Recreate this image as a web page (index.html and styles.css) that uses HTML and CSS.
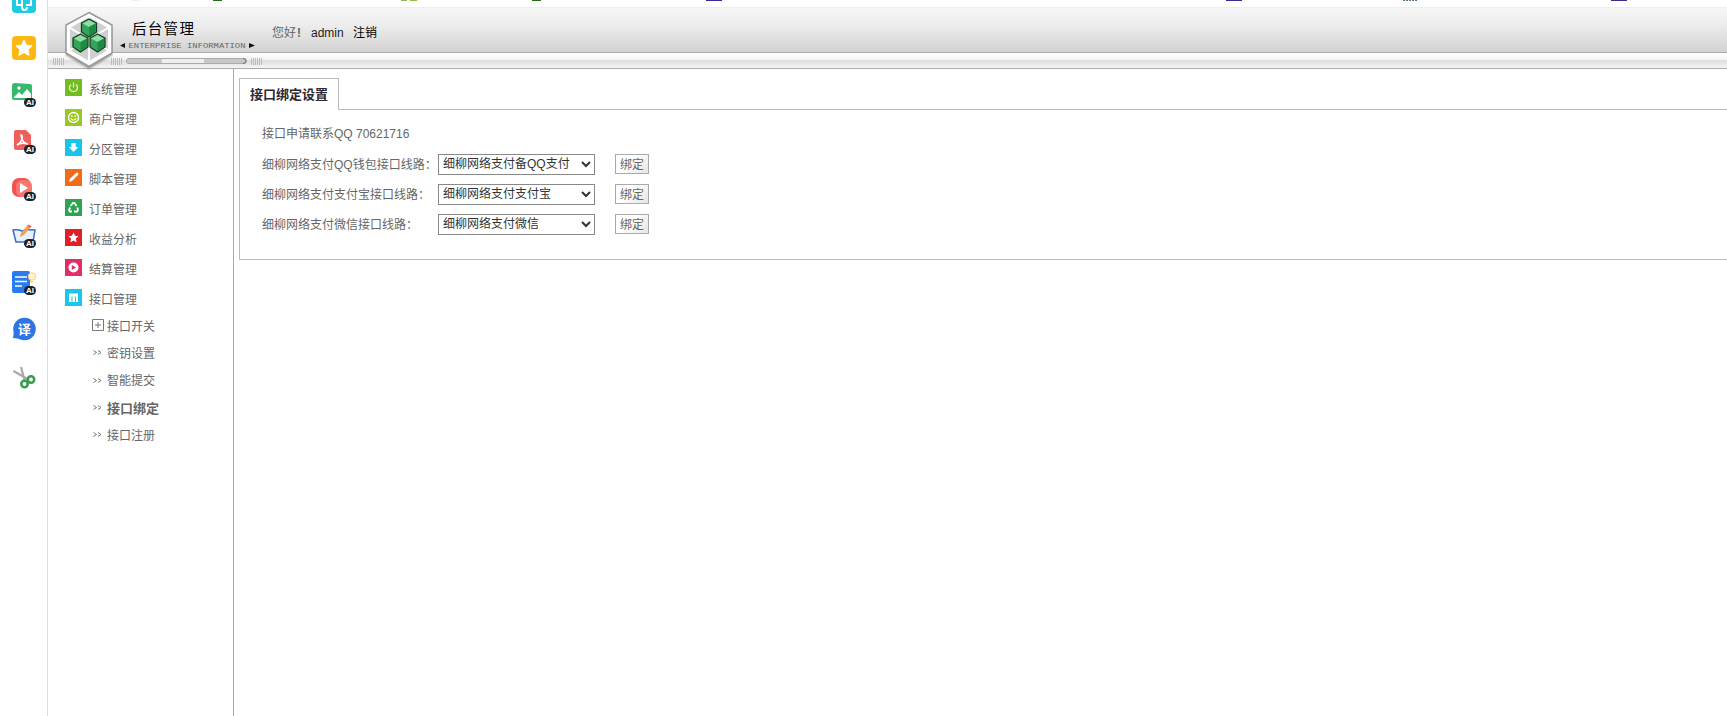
FILE: index.html
```html
<!DOCTYPE html>
<html lang="zh-CN">
<head>
<meta charset="utf-8">
<title>后台管理</title>
<link rel="stylesheet" href="styles.css">
</head>
<body>
<div class="app">
  <aside class="rail">
    <svg class="tool" viewBox="0 0 24 24"><rect width="24" height="24" rx="4" fill="#21cbe3"/><path d="M5 10v6h5M19 10v6h-5M10 10v8q0 3 2.500 3t2.500-3" fill="none" stroke="#fff" stroke-width="2"/></svg>
    <svg class="tool" viewBox="0 0 24 24"><rect width="24" height="24" rx="4" fill="#fdb813"/><path d="M12 4l2.500 5.200 5.600.7-4.100 3.900 1.100 5.600-5.100-2.800-5.100 2.800L8 13.800 3.900 9.900l5.600-.7z" fill="#fff" stroke="#fff" stroke-linejoin="round"/></svg>
    <svg class="tool" viewBox="0 0 24 24"><path d="M3 0l15 1q2 0 2 2v12q0 2-2 2H2q-2 0-2-2V3q0-3 3-3z" fill="#35b96c"/><circle cx="7" cy="5" r="1.700" fill="#fff"/><path d="M2 14l5-5 3 3 5-6 4 5v4H2z" fill="#fff"/><g class="ai"><rect x="12" y="15" width="12" height="9" rx="4.500"/><text x="18" y="22">AI</text></g></svg>
    <svg class="tool" viewBox="0 0 24 24"><path d="M4 0h10l5 5v13q0 2-2 2H4q-2 0-2-2V2q0-2 2-2z" fill="#f0605b"/><path d="M9 5q2 0 1 4-1 4-5 6 4-3 11-1-5-1-6-5-1-3-1-4z" fill="none" stroke="#fff" stroke-width="1.500"/><g class="ai"><rect x="12" y="15" width="12" height="9" rx="4.500"/><text x="18" y="22">AI</text></g></svg>
    <svg class="tool" viewBox="0 0 24 24"><rect y="1" width="19" height="19" rx="7" fill="#f2524f"/><rect x="4" y="3" width="16" height="17" rx="6" fill="#fa7771"/><path d="M8 6l8 5-8 5z" fill="#fff"/><g class="ai"><rect x="12" y="15" width="12" height="9" rx="4.500"/><text x="18" y="22">AI</text></g></svg>
    <svg class="tool" viewBox="0 0 24 24"><path d="M1 6q5-1 9 1 5-2 13-1l-2 12H4z" fill="#e8f1ff" stroke="#4169c5" stroke-width="1.500"/><path d="M8 13l1-4 6-7 3 2-6 7z" fill="#f0a04b"/><path d="M15 2l1.500-1.500 3 2L18 4z" fill="#e55b50"/><g class="ai"><rect x="12" y="15" width="12" height="9" rx="4.500"/><text x="18" y="22">AI</text></g></svg>
    <svg class="tool" viewBox="0 0 24 24"><rect width="18" height="22" rx="2" fill="#297bf0"/><path d="M3 6h12M3 10.500h12M3 15h7" stroke="#fff" stroke-width="1.700"/><circle cx="20" cy="5.500" r="3.700" fill="#fff2c5" stroke="#f4d28c"/><path d="M18 9v3h3V9" fill="#f7dca0"/><g class="ai"><rect x="12" y="15" width="12" height="9" rx="4.500"/><text x="18" y="22">AI</text></g></svg>
    <svg class="tool" viewBox="0 0 24 24"><circle cx="12.500" cy="11" r="11.300" fill="#2d75e4"/><path d="M2 13l-1 7 9 1z" fill="#2d75e4"/><text class="translate" x="12.500" y="16">译</text></svg>
    <svg class="tool" viewBox="0 0 24 24"><path d="M1.500 6l14 8M9 2l4 15" stroke="#a9a9a9" stroke-width="2.200"/><circle cx="12.500" cy="19" r="3.200" fill="none" stroke="#3a9c50" stroke-width="2.600"/><circle cx="19" cy="14.500" r="3.200" fill="none" stroke="#3a9c50" stroke-width="2.600"/></svg>
  </aside>
  <div class="page">
    <svg class="clipped" viewBox="0 0 1679 7">
      <path d="M83 0h8" stroke="#ddd"/><path d="M165 0h9M484 0h9" stroke="#286b1d" stroke-width="2"/>
      <path d="M353 0h6M362 0h7" stroke="#94b94c" stroke-width="2"/>
      <path d="M658 0h16M1178 0h16M1563 0h16" stroke="#3c2c91" stroke-width="2"/>
      <path d="M1355 0h15" stroke="#567282" stroke-width="2" stroke-dasharray="2 1"/>
    </svg>
    <header>
      <div class="topbar">
        <div class="brand"><strong>后台管理</strong>
          <svg class="tagline" viewBox="0 0 136 7"><path d="M0 3.500l5-2.500v5zM135 3.500l-6-2.500v5z" fill="#111"/><text x="8.500" y="6" textLength="117" lengthAdjust="spacingAndGlyphs">ENTERPRISE INFORMATION</text></svg>
        </div>
        <div class="user"><span>您好<em>!</em></span><b>admin</b><a>注销</a></div>
      </div>
      <div class="strip">
        <svg class="rails" viewBox="0 0 224 15"><g stroke="#bbb"><path d="M5.500 5v7M7.500 5v7M9.500 5v7M11.500 5v7M13.500 5v7M15.500 5v7M63.500 5v7M65.500 5v7M67.500 5v7M69.500 5v7M71.500 5v7M73.500 5v7M203.500 5v7M205.500 5v7M207.500 5v7M209.500 5v7M211.500 5v7M213.500 5v7"/></g><rect x="78.500" y="5.500" width="120" height="5" rx="2.500" fill="#c8c8c8" stroke="#aaa"/><path d="M114 8h42" stroke="#eee" stroke-width="4"/><path d="M195 5.500q3 0 3 2.500t-3 2.500" fill="none" stroke="#777"/></svg>
      </div>
      <svg class="logo" viewBox="0 0 56 60">
        <path d="M28 4L52 17v28L28 60 4 45V17z" fill="#777" opacity=".18"/>
        <path d="M28 6L51 18v26L28 58 5 44V18z" fill="#666" opacity=".4"/>
        <path d="M28 1.500L51 14v28L28 55.500 5 42V14z" fill="#fff" stroke="#999" stroke-width="1.500"/>
        <path d="M28 6L47 17v22L28 50 9 39V17z" fill="#cfcfd1"/><path d="M28 28V6M28 28L47 39M28 28L9 39M28 28v22M28 28L9 17M28 28l19-11" stroke="#fff" stroke-width="2"/>
        <g stroke="#153f22" stroke-width="1.300" stroke-linejoin="round">
          <path d="M28 8l7.500 4v9L28 26l-7.500-5v-9z" fill="#35a557"/><path d="M19.500 23l7.500 4v9l-7.500 5-7.500-5v-9z" fill="#35a557"/><path d="M36.500 23l7.500 4v9l-7.500 5-7.500-5v-9z" fill="#35a557"/>
        </g>
        <path d="M28 9l6.500 3.500L28 16l-6.500-3.500zM19.500 24l6.500 3.500-6.500 3.500-6.500-3.500zM36.500 24l6.500 3.500-6.500 3.500-6.500-3.500z" fill="#91dda8"/>
        <path d="M28 16l6.500-3.500V21L28 25zM19.500 31l6.500-3.500V36l-6.500 4zM36.500 31l6.500-3.500V36l-6.500 4z" fill="#1c8c40"/>
      </svg>
    </header>
    <div class="body">
      <nav>
        <ul class="menu">
          <li><svg viewBox="0 0 17 17"><rect width="17" height="17" fill="#72bd20"/><path d="M6 5.500a4 4 0 1 0 5 0M8.500 3.500v5" fill="none" stroke="#e5f7ca" stroke-width="1.300"/></svg>系统管理</li>
          <li><svg viewBox="0 0 17 17"><rect width="17" height="17" fill="#98c923"/><circle cx="8.500" cy="8.500" r="5" fill="none" stroke="#fff" stroke-width="1.300"/><path d="M6 7.200h1.700M9.300 7.200H11M6 9.500q2.500 3 5 0" fill="none" stroke="#fff" stroke-width="1.200"/></svg>商户管理</li>
          <li><svg viewBox="0 0 17 17"><rect width="17" height="17" fill="#17c4ee"/><path d="M6.300 4h4.400v4h2.500L8.500 13 3.800 8h2.500z" fill="#fff"/></svg>分区管理</li>
          <li><svg viewBox="0 0 17 17"><rect width="17" height="17" fill="#f26b17"/><path d="M4 13l.7-3L10.500 4.500l2-1 1 1-1 2L7 12z" fill="#fff"/></svg>脚本管理</li>
          <li><svg viewBox="0 0 17 17"><rect width="17" height="17" fill="#2ba350"/><path d="M5.500 7L8 4h1.500l2 3M12.300 8.500L13 11l-1 1.500H9M7 12.500H4.800L4 11l1.200-2.500" fill="none" stroke="#fff" stroke-width="1.800"/></svg>订单管理</li>
          <li><svg viewBox="0 0 17 17"><rect width="17" height="17" fill="#df2026"/><path d="M8.500 3.500l1.500 3.300 3.500.4-2.600 2.400.7 3.600-3.100-1.800-3.100 1.800.7-3.600-2.600-2.400 3.500-.4z" fill="#fff"/></svg>收益分析</li>
          <li><svg viewBox="0 0 17 17"><rect width="17" height="17" fill="#e42d66"/><circle cx="8.500" cy="8.500" r="5" fill="#fff"/><path d="M6.800 6l4.200 2.500L6.800 11z" fill="#e42d66"/></svg>结算管理</li>
          <li><svg viewBox="0 0 17 17"><rect width="17" height="17" fill="#19c8e8"/><path d="M4 4.500h9V13h-2V7.500h-1V13H7.500V7.500h-1V13H4z" fill="#fff"/></svg>接口管理</li>
        </ul>
        <ul class="submenu">
          <li><svg viewBox="0 0 12 12"><path d="M.5.500h11v11H.5zM6 3v6M3 6h6" fill="none" stroke="#777"/></svg>接口开关</li>
          <li><svg viewBox="0 0 12 12"><path d="M1.500 4.500l3 2-3 2M6 4.500l3 2-3 2" fill="none" stroke="#777"/></svg>密钥设置</li>
          <li><svg viewBox="0 0 12 12"><path d="M1.500 4.500l3 2-3 2M6 4.500l3 2-3 2" fill="none" stroke="#777"/></svg>智能提交</li>
          <li class="current"><svg viewBox="0 0 12 12"><path d="M1.500 4.500l3 2-3 2M6 4.500l3 2-3 2" fill="none" stroke="#777"/></svg>接口绑定</li>
          <li><svg viewBox="0 0 12 12"><path d="M1.500 4.500l3 2-3 2M6 4.500l3 2-3 2" fill="none" stroke="#777"/></svg>接口注册</li>
        </ul>
      </nav>
      <main>
        <div class="tabs"><h1>接口绑定设置</h1><i></i></div>
        <section class="panel">
          <p>接口申请联系QQ 70621716</p>
          <div class="row"><label>细柳网络支付QQ钱包接口线路：</label><select><option>细柳网络支付备QQ支付</option></select><button>绑定</button></div>
          <div class="row"><label>细柳网络支付支付宝接口线路：</label><select><option>细柳网络支付支付宝</option></select><button>绑定</button></div>
          <div class="row"><label>细柳网络支付微信接口线路：</label><select><option>细柳网络支付微信</option></select><button>绑定</button></div>
        </section>
      </main>
    </div>
  </div>
</div>
</body>
</html>
```
FILE: styles.css
```css
* { box-sizing: border-box; }
body { margin: 0; background: #fff; color: #666; font: 12px/18px "Liberation Sans", "Noto Sans CJK SC", sans-serif; }
ul, h1, p { margin: 0; padding: 0; list-style: none; }
svg { display: block; flex: none; }
.app { display: flex; height: 716px; overflow: hidden; }
.rail { width: 48px; flex: none; border-right: 1px solid #ddd; display: flex; flex-direction: column; align-items: center; gap: 23px; margin-top: -11px; }
.tool { width: 24px; height: 24px; overflow: visible; }
.ai rect { fill: #202125; }
.ai text { fill: #fff; font-size: 8px; font-weight: bold; text-anchor: middle; }
.translate { fill: #fff; font-size: 13px; font-weight: bold; text-anchor: middle; }
.page { flex: 1; min-width: 0; display: flex; flex-direction: column; }
.clipped { width: 1679px; height: 7px; }
header { position: relative; flex: none; height: 62px; }
.topbar { height: 46px; display: flex; padding-left: 72px; border-top: 1px solid #eee; border-bottom: 1px solid #aaa; background: linear-gradient(#f7f7f7, #ececec 40%, #d2d2d2); }
.brand { width: 152px; padding-top: 10px; color: #000; }
.brand strong { display: block; margin-left: 12px; font-size: 14.500px; line-height: 22px; font-weight: normal; letter-spacing: 1.300px; }
.tagline { width: 136px; height: 7px; margin-top: 2px; }
.tagline text { font: 7px "Liberation Mono", monospace; fill: #666; }
.user { display: flex; padding-top: 16px; }
.user span { width: 39px; }
.user em { margin-left: 1px; font-style: normal; font-weight: bold; }
.user b { width: 42px; font-weight: normal; color: #222; }
.user a { color: #000; }
.strip { height: 16px; border-bottom: 1px solid #aaa; background: linear-gradient(#fff 0, #f2f2f2 45%, #e1e1e1 48%, #e3e3e3 65%, #f6f6f6 100%); }
.rails { width: 224px; height: 15px; }
.logo { position: absolute; left: 13px; top: 4px; width: 56px; height: 60px; }
.body { flex: 1; display: flex; min-height: 0; }
nav { width: 186px; flex: none; border-right: 1px solid #aaa; padding: 6px 0 0 17px; }
.menu li { display: flex; align-items: center; height: 30px; gap: 7px; }
.menu svg { width: 17px; height: 17px; margin-top: -5px; }
.submenu { padding-left: 27px; margin-top: -2px; }
.submenu li { display: flex; align-items: center; height: 27.300px; gap: 3px; }
.submenu svg { width: 12px; height: 12px; margin-top: -3px; }
.submenu .current { font-weight: bold; font-size: 13px; }
main { flex: 1; min-width: 0; padding: 9px 0 0 5px; }
.tabs { display: flex; height: 32px; }
.tabs h1 { width: 100px; border: 1px solid #bbb; border-bottom: 0; padding-left: 10px; color: #2d2733; font-size: 13px; line-height: 31px; }
.tabs i { flex: 1; border-bottom: 1px solid #bbb; }
.panel { height: 150px; padding: 9px 0 0 22px; border-left: 1px solid #bbb; border-bottom: 1px solid #bbb; }
.panel p { line-height: 30px; }
.row { display: flex; align-items: center; height: 30px; }
.row label { width: 176px; padding-top: 2px; white-space: nowrap; }
.row select { width: 157px; height: 21px; padding: 0; border: 1px solid #888; border-radius: 0; background: #fff; color: #333; font: 12px "Liberation Sans", "Noto Sans CJK SC", sans-serif; }
.row button { width: 34px; height: 20px; margin: 0 0 1px 20px; padding: 1px 0 0; border: 1px solid #aaa; background: linear-gradient(135deg, #fff 40%, #e5e5e5); color: #666; font: 12px/18px "Liberation Sans", "Noto Sans CJK SC", sans-serif; }
```
